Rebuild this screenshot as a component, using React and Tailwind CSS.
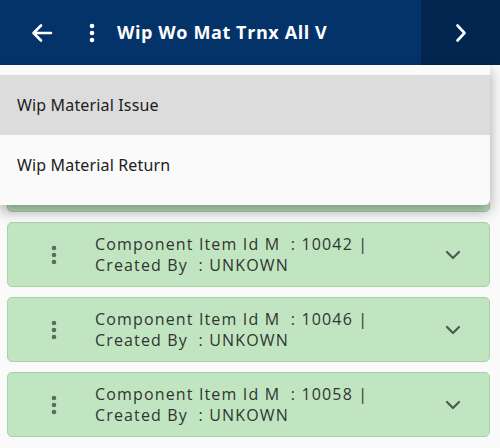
import React from 'react';

const rows = [
    { id: '10042' },
    { id: '10046' },
    { id: '10058' },
];

function Dots({ className }) {
    return (
        <svg width="6" height="20" viewBox="0 0 6 20" className={className}>
            <circle cx="3" cy="3" r="2.3" fill="currentColor" />
            <circle cx="3" cy="10" r="2.3" fill="currentColor" />
            <circle cx="3" cy="17" r="2.3" fill="currentColor" />
        </svg>
    );
}

function Card({ id }) {
    return (
        <div className="flex items-center h-[65px] bg-[#c1e5c1] border border-[#a6d2a6] rounded-[5px]">
            <Dots className="ml-[43px] text-[#5d6b5d]" />
            <div
                className="ml-[38px] flex-1 text-[16px] leading-[21px] tracking-[1.15px] text-[#303530] whitespace-pre"
                style={{ fontFamily: '"Open Sans", sans-serif' }}
            >
                <div>{`Component Item Id M  : ${id} |`}</div>
                <div>{'Created By  : UNKOWN'}</div>
            </div>
            <svg width="16" height="10" viewBox="0 0 16 10" className="mr-[28px]">
                <path d="M2 2L8 8L14 2" fill="none" stroke="#4d5a4d" strokeWidth="2.2" strokeLinecap="round" strokeLinejoin="round" />
            </svg>
        </div>
    );
}

function App() {
    return (
        <div className="relative w-[500px] h-[448px] overflow-hidden bg-[#fafafa]" style={{ fontFamily: 'Roboto, sans-serif' }}>
            {/* header */}
            <div className="flex h-[65px] bg-[#043369] text-white">
                <div className="flex items-center flex-1">
                    <svg width="22" height="20" viewBox="0 0 22 20" className="ml-[31px]">
                        <path d="M20 10H3M10 2.5L2.5 10L10 17.5" fill="none" stroke="white" strokeWidth="2.6" strokeLinecap="round" strokeLinejoin="round" />
                    </svg>
                    <Dots className="ml-[36px] text-white" />
                    <span className="ml-[22px] text-[18px] font-bold tracking-[0.6px]" style={{ fontFamily: '"Open Sans", sans-serif' }}>
                        Wip Wo Mat Trnx All V
                    </span>
                </div>
                <div className="w-[79px] flex items-center justify-center bg-[#022650]">
                    <svg width="12" height="20" viewBox="0 0 12 20">
                        <path d="M2.5 2.5L9.5 10L2.5 17.5" fill="none" stroke="white" strokeWidth="2.6" strokeLinecap="round" strokeLinejoin="round" />
                    </svg>
                </div>
            </div>

            {/* list */}
            <div className="flex flex-col gap-[10px] pt-[82px] pl-[7px] pr-[10px]">
                {/* first card sits under the open menu */}
                <div className="h-[65px] bg-[#c1e5c1] border border-[#a6d2a6] rounded-[5px]" />
                {rows.map((r) => (
                    <Card key={r.id} id={r.id} />
                ))}
            </div>

            {/* dropdown menu */}
            <div
                className="absolute left-0 top-[65px] w-[490px] bg-[#fafafa] rounded-br-[5px] pt-[10px] pb-[10px] shadow-[0_6px_14px_rgba(0,0,0,0.35)]"
                style={{ fontFamily: '"Noto Sans", sans-serif' }}
            >
                <div className="h-[60px] flex items-center pl-[17px] bg-[#dcdcdc] text-[16px] tracking-[0.15px] text-[#202020]">Wip Material Issue</div>
                <div className="h-[60px] flex items-center pl-[17px] text-[16px] tracking-[0.15px] text-[#202020]">Wip Material Return</div>
            </div>
        </div>
    );
}

export default App;
